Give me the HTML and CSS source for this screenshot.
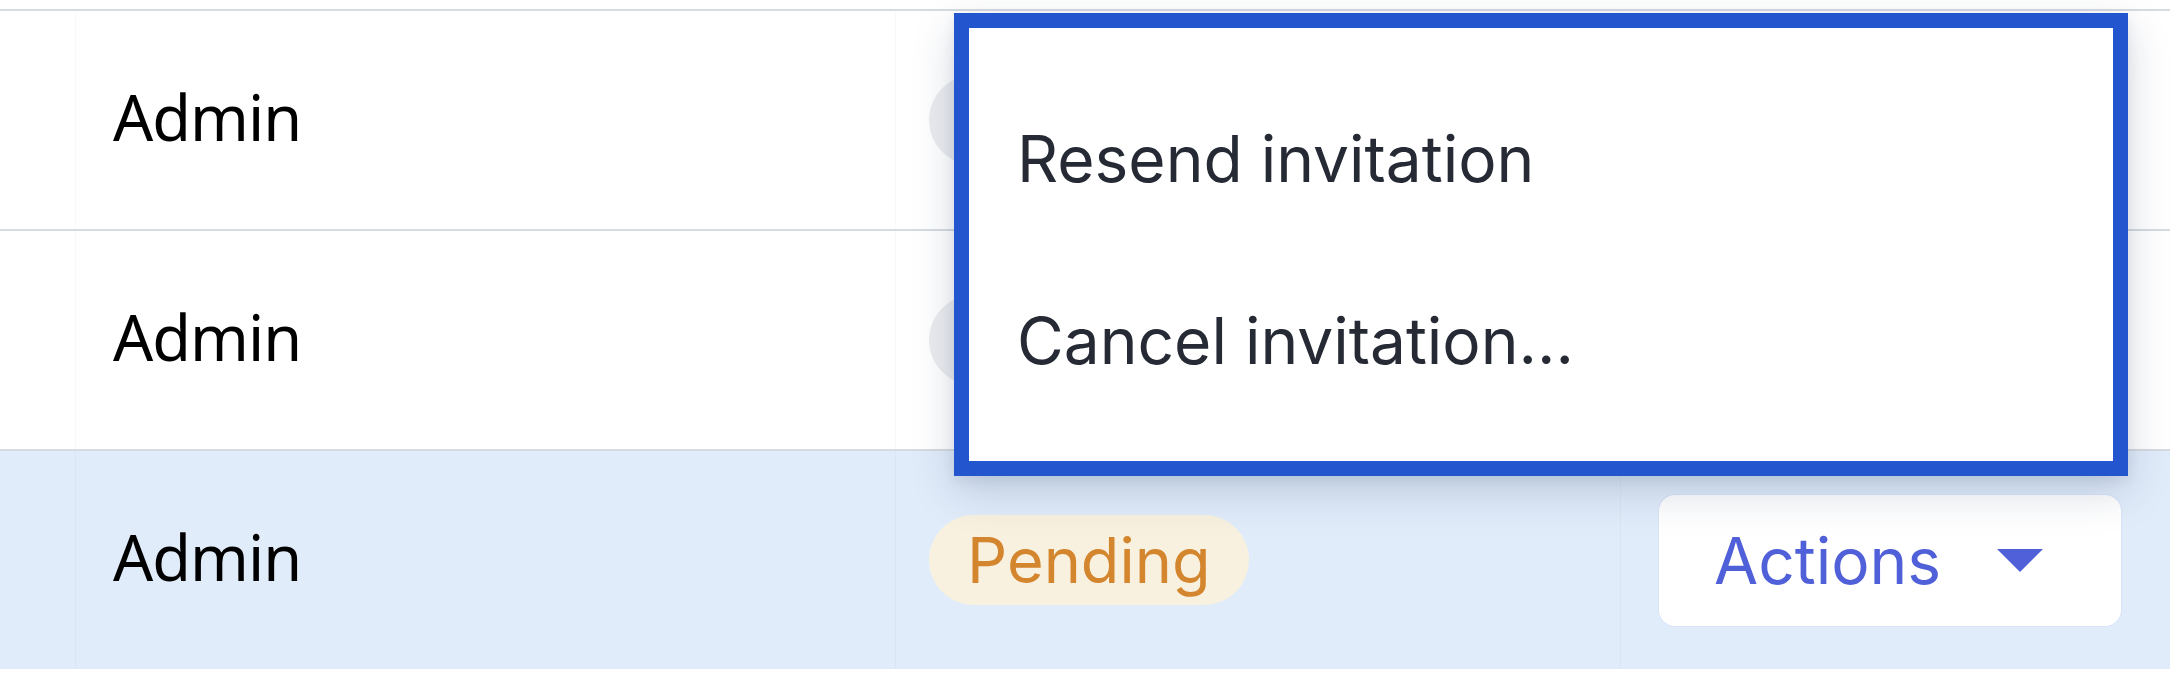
FILE: index.html
```html
<!DOCTYPE html>
<html lang="en">
<head>
<meta charset="utf-8">
<title>Members</title>
<link rel="stylesheet" href="styles.css">
</head>
<body>
<div class="table">
  <div class="row">
    <div class="cell c0"></div>
    <div class="cell c1">Admin</div>
    <div class="cell c2"><span class="pill pill-gray"></span></div>
    <div class="cell c3"></div>
  </div>
  <div class="row">
    <div class="cell c0"></div>
    <div class="cell c1">Admin</div>
    <div class="cell c2"><span class="pill pill-gray"></span></div>
    <div class="cell c3"></div>
  </div>
  <div class="row selected">
    <div class="cell c0"></div>
    <div class="cell c1">Admin</div>
    <div class="cell c2"><span class="pill pill-pending">Pending</span></div>
    <div class="cell c3"><button class="actions">Actions <span class="caret"></span></button></div>
  </div>
  <div class="menu">
    <div class="menu-item">Resend invitation</div>
    <div class="menu-item">Cancel invitation...</div>
  </div>
</div>
</body>
</html>
```

FILE: styles.css
```css
html, body {
  margin: 0;
  padding: 0;
  background: #ffffff;
}

body {
  width: 2170px;
  height: 677px;
  overflow: hidden;
}

.table {
  position: relative;
  margin-top: 9px;
  font-family: Inter, "Liberation Sans", sans-serif;
}

.row {
  display: grid;
  grid-template-columns: 75px 820px 725px 1fr;
  height: 218px;
  border-top: 2px solid #d6dae1;
  background: #ffffff;
}

.row:last-of-type {
  border-bottom: 2px solid #d6dae1;
}

.row.selected {
  background: #e1ecfa;
}

.cell {
  display: flex;
  align-items: center;
  border-left: 1px solid rgba(0, 0, 0, 0.025);
}

.cell.c0 {
  border-left: none;
}

.c1 {
  padding-left: 37px;
  padding-bottom: 7px;
  box-sizing: border-box;
  font-family: "Noto Sans", "Open Sans", sans-serif;
  font-size: 63px;
  letter-spacing: -1px;
  color: #000000;
}

.c2 {
  padding-left: 33px;
}

.c3 {
  padding-left: 38px;
}

.pill {
  display: inline-flex;
  align-items: center;
  height: 90px;
  padding: 0 38px;
  border-radius: 45px;
  font-size: 63px;
  line-height: 1;
  box-sizing: border-box;
}

.pill-gray {
  width: 260px;
  background: #ebecef;
}

.pill-pending {
  background: #f9f1df;
  color: #d4862f;
}

.actions {
  display: inline-flex;
  align-items: center;
  width: 462px;
  height: 131px;
  padding: 0 0 0 55px;
  border: none;
  border-radius: 16px;
  background: #ffffff;
  box-shadow: 0 0 0 1px rgba(99, 102, 241, 0.06);
  font-family: Inter, "Liberation Sans", sans-serif;
  font-size: 64px;
  color: #5060d8;
  box-sizing: border-box;
}

.caret {
  display: inline-block;
  width: 0;
  height: 0;
  margin-left: 56px;
  border-left: 23px solid transparent;
  border-right: 23px solid transparent;
  border-top: 23px solid #5060d8;
}

.menu {
  position: absolute;
  left: 954px;
  top: 4px;
  width: 1174px;
  box-sizing: border-box;
  border: 15px solid #2356ce;
  background: #ffffff;
  padding: 40px 0 29px;
  box-shadow: 0 16px 40px rgba(30, 50, 90, 0.18), 0 4px 12px rgba(30, 50, 90, 0.08);
}

.menu-item {
  padding: 51px 48px;
  font-size: 64px;
  line-height: 80px;
  color: #252a34;
  white-space: nowrap;
}
```
